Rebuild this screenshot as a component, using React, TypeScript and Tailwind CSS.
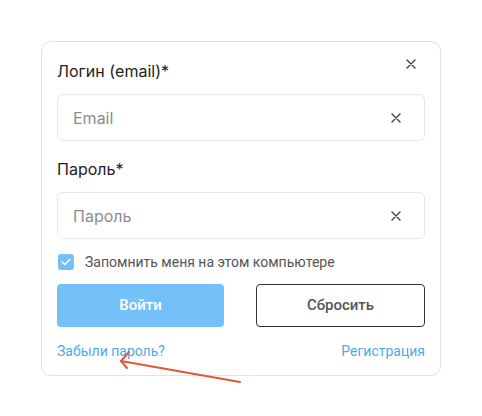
// Login card — auth form with remember-me and links

function CloseIcon({ size = 10 }: { size?: number }) {
  return (
    <svg width={size} height={size} viewBox="0 0 10 10" fill="none" stroke="#444" strokeWidth="1.4" strokeLinecap="round">
      <path d="M1 1L9 9M9 1L1 9" />
    </svg>
  );
}

function Field({ label, placeholder }: { label: string; placeholder: string }) {
  return (
    <div>
      <div className="text-[16px] leading-[20px] text-[#222]">{label}</div>
      <div className="mt-[13px] flex h-[47px] items-center justify-between rounded-[6px] border border-[#e6e6e6] pl-[15px] pr-[23px]">
        <span className="text-[16px] text-[#8c8c8c]">{placeholder}</span>
        <CloseIcon size={10} />
      </div>
    </div>
  );
}

export default function App() {
  return (
    <div className="relative h-[416px] w-[482px] bg-white pt-[41px] pl-[41px]" style={{ fontFamily: "Inter, 'Noto Sans', sans-serif" }}>
      <div className="flex w-[400px] flex-col rounded-[10px] border border-[#e2e2e2] px-[15px] pt-[19px] pb-[14px]">
        {/* Header row */}
        <div className="relative">
          <Field label="Логин (email)*" placeholder="Email" />
          <div className="absolute right-[9px] top-[-2px]">
            <CloseIcon size={10} />
          </div>
        </div>

        <div className="mt-[18px]">
          <Field label="Пароль*" placeholder="Пароль" />
        </div>

        {/* Remember me */}
        <div className="mt-[14px] flex items-center gap-[11px] pl-[1px]">
          <div className="flex h-[16px] w-[16px] items-center justify-center rounded-[3px] bg-[#74c0f8]">
            <svg width="10" height="8" viewBox="0 0 10 8" fill="none" stroke="white" strokeWidth="1.4" strokeLinecap="round" strokeLinejoin="round">
              <path d="M1 4L3.8 6.6L9 1.2" />
            </svg>
          </div>
          <span className="text-[14px] leading-[18px] text-[#555]" style={{ fontFamily: "Roboto, sans-serif" }}>
            Запомнить меня на этом компьютере
          </span>
        </div>

        {/* Buttons */}
        <div className="mt-[13px] flex gap-[32px]">
          <button className="h-[43px] flex-1 rounded-[4px] bg-[#74c0f8] text-[15px] font-medium text-white" style={{ fontFamily: "Roboto, sans-serif" }}>
            Войти
          </button>
          <button className="h-[43px] flex-1 rounded-[4px] border border-[#333] bg-white text-[15px] font-medium text-[#555]" style={{ fontFamily: "Roboto, sans-serif" }}>
            Сбросить
          </button>
        </div>

        {/* Links */}
        <div className="mt-[14px] flex items-center justify-between text-[14px] leading-[20px] text-[#4fa9e6]" style={{ fontFamily: "Roboto, sans-serif" }}>
          <a>Забыли пароль?</a>
          <a>Регистрация</a>
        </div>
      </div>

      {/* Annotation arrow */}
      <svg className="absolute left-0 top-0" width="482" height="416" fill="none" stroke="#e5553a" strokeWidth="2" strokeLinecap="round">
        <path d="M240 382L121 361" />
        <path d="M129 352L121 361L127 368" />
      </svg>
    </div>
  );
}
